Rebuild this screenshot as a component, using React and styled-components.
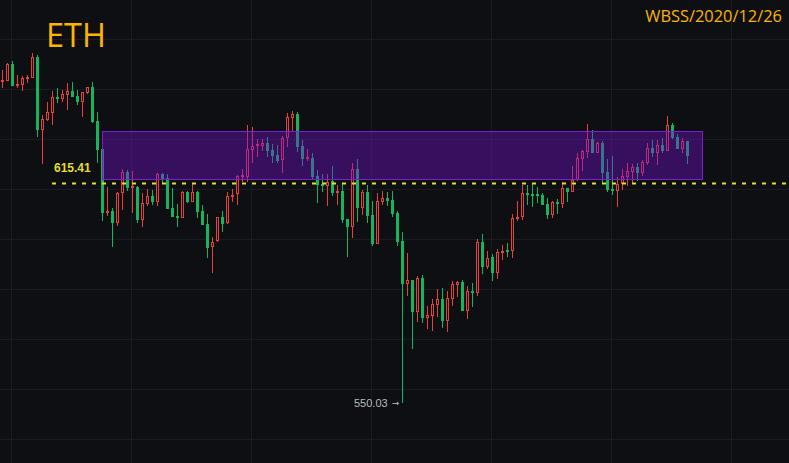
import React from 'react';
import styled, { createGlobalStyle } from 'styled-components';

const BG = '#0d0f12';
const GREEN = '#15b45e';
const RED = '#e8403f';

// hi, lo, body top, body bottom, colour. one candle every 5px starting at x=2.5
const candles = [
  [70, 88, 80, 82, 'r'], [63, 81, 64, 81, 'r'], [61, 86, 64, 86, 'g'], [75, 88, 84, 86, 'r'],
  [76, 91, 78, 85, 'r'], [75, 83, 77, 79, 'r'], [53, 78, 57, 78, 'r'], [55, 137, 57, 130, 'g'],
  [115, 164, 119, 130, 'r'], [102, 121, 112, 120, 'r'], [91, 125, 97, 113, 'r'], [88, 103, 97, 99, 'g'],
  [90, 102, 94, 99, 'r'], [83, 110, 91, 95, 'r'], [82, 97, 91, 97, 'g'], [90, 105, 96, 102, 'g'],
  [92, 117, 92, 102, 'r'], [87, 94, 87, 93, 'r'], [82, 123, 87, 122, 'g'], [112, 163, 121, 150, 'g'],
  [149, 221, 149, 213, 'g'], [187, 216, 211, 213, 'r'], [208, 247, 211, 223, 'g'], [192, 226, 193, 223, 'r'],
  [169, 210, 172, 193, 'r'], [170, 191, 172, 188, 'g'], [171, 213, 186, 188, 'r'], [186, 223, 187, 220, 'g'],
  [193, 227, 203, 220, 'r'], [189, 206, 196, 204, 'r'], [190, 205, 196, 202, 'g'], [173, 206, 174, 202, 'r'],
  [173, 184, 174, 179, 'g'], [174, 209, 178, 209, 'g'], [188, 217, 208, 217, 'g'], [204, 227, 216, 218, 'g'],
  [191, 218, 192, 218, 'r'], [191, 203, 192, 202, 'g'], [183, 202, 192, 202, 'r'], [191, 218, 192, 212, 'g'],
  [205, 225, 211, 225, 'g'], [214, 258, 224, 248, 'g'], [237, 273, 242, 247, 'r'], [217, 242, 217, 241, 'r'],
  [211, 232, 217, 224, 'g'], [192, 224, 196, 223, 'r'], [189, 202, 195, 197, 'r'], [175, 205, 176, 194, 'r'],
  [169, 182, 175, 177, 'r'], [125, 182, 149, 177, 'r'], [127, 163, 146, 150, 'r'], [139, 157, 144, 146, 'r'],
  [139, 151, 143, 146, 'r'], [137, 157, 143, 151, 'g'], [144, 163, 150, 156, 'g'], [145, 163, 155, 161, 'g'],
  [136, 173, 138, 160, 'r'], [113, 147, 117, 138, 'r'], [111, 132, 114, 118, 'r'], [112, 152, 114, 147, 'g'],
  [140, 166, 146, 159, 'g'], [149, 161, 157, 159, 'r'], [153, 179, 158, 177, 'g'], [170, 203, 176, 185, 'g'],
  [174, 192, 184, 186, 'g'], [174, 206, 182, 186, 'r'], [166, 196, 181, 193, 'g'], [185, 205, 191, 193, 'r'],
  [183, 223, 191, 220, 'g'], [219, 257, 219, 227, 'g'], [163, 238, 169, 227, 'r'], [159, 222, 169, 208, 'g'],
  [190, 215, 192, 208, 'r'], [185, 223, 192, 216, 'g'], [201, 246, 215, 244, 'g'], [193, 244, 201, 244, 'r'],
  [191, 205, 198, 202, 'r'], [192, 206, 198, 201, 'g'], [191, 217, 200, 214, 'g'], [211, 246, 213, 242, 'g'],
  [232, 403, 241, 284, 'g'], [253, 296, 280, 284, 'r'], [280, 349, 280, 312, 'g'], [276, 322, 278, 312, 'r'],
  [275, 323, 278, 318, 'g'], [306, 329, 315, 318, 'r'], [299, 331, 304, 316, 'r'], [289, 317, 299, 305, 'r'],
  [288, 328, 299, 321, 'g'], [291, 332, 298, 321, 'r'], [281, 306, 284, 299, 'r'], [281, 297, 282, 285, 'r'],
  [280, 311, 282, 311, 'g'], [286, 319, 291, 311, 'r'], [283, 307, 291, 293, 'g'], [239, 296, 242, 293, 'r'],
  [234, 274, 242, 267, 'g'], [251, 269, 258, 267, 'r'], [254, 281, 257, 273, 'g'], [249, 279, 252, 273, 'r'],
  [245, 260, 251, 253, 'r'], [243, 257, 250, 252, 'g'], [214, 258, 218, 251, 'r'], [201, 221, 217, 219, 'r'],
  [185, 220, 193, 217, 'r'], [185, 205, 193, 195, 'g'], [183, 207, 194, 196, 'g'], [187, 203, 194, 196, 'g'],
  [193, 205, 195, 205, 'g'], [198, 219, 204, 215, 'g'], [201, 218, 202, 215, 'r'], [199, 214, 202, 204, 'g'],
  [182, 208, 188, 204, 'r'], [188, 202, 188, 192, 'g'], [166, 192, 180, 192, 'r'], [153, 181, 158, 180, 'r'],
  [150, 171, 151, 159, 'r'], [124, 158, 139, 152, 'r'], [130, 153, 139, 153, 'g'], [142, 153, 143, 153, 'r'],
  [141, 183, 143, 173, 'g'], [159, 192, 172, 190, 'g'], [156, 195, 189, 191, 'g'], [177, 207, 184, 191, 'r'],
  [169, 190, 176, 184, 'r'], [163, 186, 171, 177, 'r'], [164, 183, 167, 172, 'r'], [163, 181, 167, 173, 'g'],
  [160, 176, 162, 173, 'r'], [143, 165, 148, 163, 'r'], [140, 157, 148, 153, 'g'], [140, 165, 145, 153, 'r'],
  [138, 153, 145, 151, 'g'], [116, 151, 125, 151, 'r'], [123, 139, 125, 138, 'g'], [134, 149, 137, 149, 'g'],
  [138, 153, 141, 149, 'r'], [141, 164, 141, 156, 'g'],
];

const verticals = [11.5, 131.5, 251.5, 371.5, 491.5, 611.5, 731.5];
const horizontals = [39.5, 89.5, 139.5, 189.5, 239.5, 289.5, 339.5, 389.5, 439.5];

const GlobalStyle = createGlobalStyle`
  html, body {
    margin: 0;
    padding: 0;
    background: ${BG};
    overflow: hidden;
  }
`;

const ChartContainer = styled.div`
  position: relative;
  width: 789px;
  height: 463px;
  background: ${BG};
  overflow: hidden;
  font-family: 'Open Sans', 'Noto Sans', sans-serif;
`;

const ChartSvg = styled.svg`
  display: block;
`;

const Header = styled.div`
  position: absolute;
  inset: 0 0 auto 0;
  display: flex;
  justify-content: space-between;
  align-items: flex-start;
  padding: 14px 7px 0 46px;
  color: #fbb400;
`;

const Symbol = styled.div`
  font-size: 32.5px;
  line-height: 42px;
`;

const DateStamp = styled.div`
  font-size: 16.4px;
  line-height: 20px;
  margin-top: -8px;
`;

const PriceTag = styled.div`
  position: absolute;
  left: ${(p) => p.$x}px;
  top: ${(p) => p.$y}px;
  display: flex;
  align-items: center;
  gap: 4px;
  color: ${(p) => p.$color};
  font-family: 'Liberation Sans', Arial, sans-serif;
  font-size: ${(p) => p.$size}px;
  font-weight: ${(p) => p.$weight || 400};
  line-height: 14px;
  white-space: nowrap;
`;

const Arrow = styled.span`
  font-family: 'DejaVu Sans', sans-serif;
  font-size: 9px;
`;

const Candle = ({ index, data }) => {
  const [hi, lo, top, bottom, kind] = data;
  const x = 2.5 + index * 5;
  const color = kind === 'g' ? GREEN : RED;
  return (
    <g>
      <rect x={x - 0.5} y={hi} width={1} height={lo - hi} fill={color} />
      {kind === 'g' ? (
        <rect x={x - 1.5} y={top} width={3} height={bottom - top} fill={color} />
      ) : (
        <rect
          x={x - 1}
          y={top + 0.5}
          width={2}
          height={Math.max(bottom - top - 1, 1)}
          fill={BG}
          stroke={color}
          strokeWidth={1}
        />
      )}
    </g>
  );
};

const App = () => {
  return (
    <ChartContainer>
      <GlobalStyle />
      <ChartSvg width="789" height="463" viewBox="0 0 789 463">
        {verticals.map((x) => (
          <line key={x} x1={x} x2={x} y1="0" y2="463" stroke="#1a1c1f" />
        ))}
        {horizontals.map((y) => (
          <line key={y} x1="0" x2="789" y1={y} y2={y} stroke="#1a1c1f" />
        ))}
        {candles.map((c, i) => (
          <Candle key={i} index={i} data={c} />
        ))}
        <rect
          x="102.5"
          y="131.5"
          width="600"
          height="48"
          fill="rgba(118, 16, 210, 0.4)"
          stroke="#7a20cc"
        />
        <line
          x1="52"
          x2="789"
          y1="183.5"
          y2="183.5"
          stroke="#e4dc30"
          strokeWidth="2"
          strokeDasharray="4 6"
        />
      </ChartSvg>
      <Header>
        <Symbol>ETH</Symbol>
        <DateStamp>WBSS/2020/12/26</DateStamp>
      </Header>
      <PriceTag $x={54} $y={161} $color="#e4dc30" $size={12} $weight={700}>
        615.41
      </PriceTag>
      <PriceTag $x={354} $y={396} $color="#b9bbbd" $size={11}>
        550.03
        <Arrow>→</Arrow>
      </PriceTag>
    </ChartContainer>
  );
};

export default App;
